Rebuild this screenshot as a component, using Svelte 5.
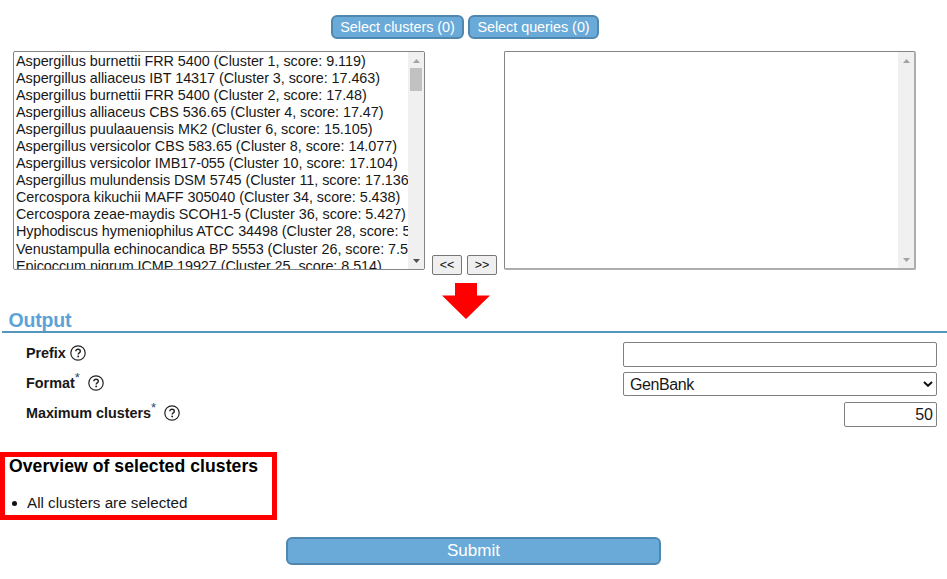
<script>
  const clusters = [
    'Aspergillus burnettii FRR 5400 (Cluster 1, score: 9.119)',
    'Aspergillus alliaceus IBT 14317 (Cluster 3, score: 17.463)',
    'Aspergillus burnettii FRR 5400 (Cluster 2, score: 17.48)',
    'Aspergillus alliaceus CBS 536.65 (Cluster 4, score: 17.47)',
    'Aspergillus puulaauensis MK2 (Cluster 6, score: 15.105)',
    'Aspergillus versicolor CBS 583.65 (Cluster 8, score: 14.077)',
    'Aspergillus versicolor IMB17-055 (Cluster 10, score: 17.104)',
    'Aspergillus mulundensis DSM 5745 (Cluster 11, score: 17.136)',
    'Cercospora kikuchii MAFF 305040 (Cluster 34, score: 5.438)',
    'Cercospora zeae-maydis SCOH1-5 (Cluster 36, score: 5.427)',
    'Hyphodiscus hymeniophilus ATCC 34498 (Cluster 28, score: 5',
    'Venustampulla echinocandica BP 5553 (Cluster 26, score: 7.5',
    'Epicoccum nigrum ICMP 19927 (Cluster 25, score: 8.514)'
  ];
</script>

{#snippet help()}
  <svg class="help" viewBox="0 0 16 16" width="16" height="16">
    <circle cx="8" cy="8" r="7.2" fill="none" stroke="#222" stroke-width="1.2" />
    <path d="M5.8 6.3C5.8 4.9 6.7 4.2 8 4.2s2.3.8 2.3 2c0 1.7-2.1 1.6-2.1 3.2" fill="none" stroke="#222" stroke-width="1.4" />
    <circle cx="8.2" cy="11.4" r="0.95" fill="#222" />
  </svg>
{/snippet}

{#snippet scrollbar(active)}
  <div class="scroll">
    <svg width="7" height="4" viewBox="0 0 7 4"><path d="M0 4L3.5 0L7 4z" fill="#a3a3a3" /></svg>
    {#if active}<div class="thumb"></div>{/if}
    <svg class="down" width="7" height="4" viewBox="0 0 7 4"><path d="M0 0L3.5 4L7 0z" fill={active ? '#505050' : '#a3a3a3'} /></svg>
  </div>
{/snippet}

<main>
  <div class="selectors">
    <button class="blue first">Select clusters (0)</button>
    <button class="blue second">Select queries (0)</button>
  </div>

  <div class="lists">
    <div class="list">
      <div class="items">
        {#each clusters as c}<div class="item"><span>{c}</span></div>{/each}
      </div>
      {@render scrollbar(true)}
    </div>
    <div class="moves">
      <button>&lt;&lt;</button>
      <button>&gt;&gt;</button>
    </div>
    <div class="list right">
      <div class="items"></div>
      {@render scrollbar(false)}
    </div>
  </div>

  <svg class="arrow" width="48" height="37" viewBox="0 0 48 37"><path d="M13 0H35V12.5H48L24 36L0 12.5H13z" fill="#f00" /></svg>

  <h2><span>Output</span></h2>

  <div class="fields">
    <div class="field">
      <span class="label prefix">Prefix</span>{@render help()}
      <div class="control"></div>
    </div>
    <div class="field">
      <span class="label format">Format</span><i>*</i>{@render help()}
      <div class="control select">
        <span>GenBank</span>
        <svg width="10" height="6" viewBox="0 0 10 6"><path d="M1 1L5 4.8L9 1" fill="none" stroke="#111" stroke-width="2" /></svg>
      </div>
    </div>
    <div class="field">
      <span class="label maximum">Maximum clusters</span><i>*</i>{@render help()}
      <div class="control number"><span>50</span></div>
    </div>
  </div>

  <section class="overview">
    <h3><span>Overview of selected clusters</span></h3>
    <div class="bullet"><b></b><span>All clusters are selected</span></div>
  </section>

  <button class="blue submit">Submit</button>
</main>

<style>
  :global(body) { margin: 0; background: #fff; }
  main {
    width: 947px; height: 579px; box-sizing: border-box; padding-top: 15px; overflow: hidden;
    display: flex; flex-direction: column; background: #fff; color: #181818;
    font-family: "Liberation Sans", Arial, sans-serif;
  }
  button { font-family: inherit; margin: 0; padding: 0; box-sizing: border-box; white-space: nowrap; }
  .blue { background: #6aaad8; border: 2px solid #4f87ae; border-radius: 6px; color: #fff; }
  .selectors { display: flex; gap: 4px; margin-left: 331px; height: 24px; }
  .selectors .blue { font-size: 14.4px; line-height: 20px; height: 24px; letter-spacing: -0.03px; }
  .first { width: 133px; }
  .second { width: 131px; }
  .lists { display: flex; margin: 12px 0 0 13px; height: 219px; }
  .list {
    display: flex; box-sizing: border-box; width: 412px; height: 219px;
    border: 1px solid #858585; border-radius: 2px; overflow: hidden;
  }
  .right { border-right: 2px solid #adadad; border-bottom: 2px solid #adadad; }
  .items { flex: 1; min-width: 0; overflow: hidden; padding: 0 0 0 2px; }
  .item { height: 17.05px; line-height: 18px; font-size: 14.4px; letter-spacing: -0.05px; white-space: nowrap; }
  .scroll {
    width: 16px; flex: none; box-sizing: border-box; background: #f0f0f0; padding: 7px 0 6px;
    display: flex; flex-direction: column; align-items: center;
  }
  .scroll svg { display: block; flex: none; }
  .thumb { width: 12px; height: 23px; background: #c1c1c1; margin-top: 5px; }
  .down { margin-top: auto; }
  .moves { display: flex; align-items: flex-start; gap: 5px; padding: 204px 8px 0 7px; width: 64px; flex: none; }
  .moves button {
    width: 30px; height: 20px; flex: none; background: #efefef; border: 1px solid #767676;
    border-radius: 2px; font-size: 12.5px; line-height: 17px; color: #111;
  }
  .arrow { display: block; flex: none; margin: 13px 0 0 442px; }
  h2 {
    margin: -11px 0 0 2px; height: 24px; box-sizing: border-box; border-bottom: 2px solid #5596bf;
    padding-left: 6.5px; font-size: 19.5px; letter-spacing: -0.2px; line-height: 22px; color: #5ba3d7; flex: none;
  }
  .fields { display: flex; flex-direction: column; gap: 5px; padding: 9px 10px 0 26px; }
  .field { display: flex; height: 25px; align-items: flex-start; }
  .label { font-weight: bold; font-size: 14.4px; letter-spacing: -0.1px; line-height: 22px; white-space: nowrap; }
  .prefix { letter-spacing: -0.06px; }
  .maximum { letter-spacing: -0.04px; }
  .format { letter-spacing: 0; }
  .field i { font-style: normal; font-size: 13px; line-height: 13px; color: #234a70; margin: -1px 4px 0 0; }
  .help { display: block; margin: 2.5px 0 0 4px; flex: none; }
  .control {
    margin-left: auto; width: 314px; height: 25px; box-sizing: border-box;
    border: 1px solid #808080; border-radius: 2px; font-size: 16px; line-height: 23px;
  }
  .select { height: 24px; display: flex; justify-content: space-between; align-items: center; padding: 0 3px 0 6px; }
  .select span { letter-spacing: -0.4px; }
  .number { width: 93px; text-align: right; padding-right: 3px; }
  .overview {
    margin-top: 25px; width: 277px; height: 68px; flex: none; box-sizing: border-box;
    border: 5px solid #f00; padding-left: 4px;
  }
  h3 { margin: 0; font-size: 17.6px; letter-spacing: 0.06px; line-height: 18px; color: #000; white-space: nowrap; }
  .bullet { display: flex; align-items: center; margin-top: 19px; padding-left: 3px; font-size: 15.2px; line-height: 18px; white-space: nowrap; }
  .bullet b { width: 5px; height: 5px; border-radius: 50%; background: #111; margin-right: 10px; }
  .submit { margin: 17px 0 0 286px; width: 375px; height: 28px; font-size: 17px; line-height: 22px; flex: none; }
</style>
